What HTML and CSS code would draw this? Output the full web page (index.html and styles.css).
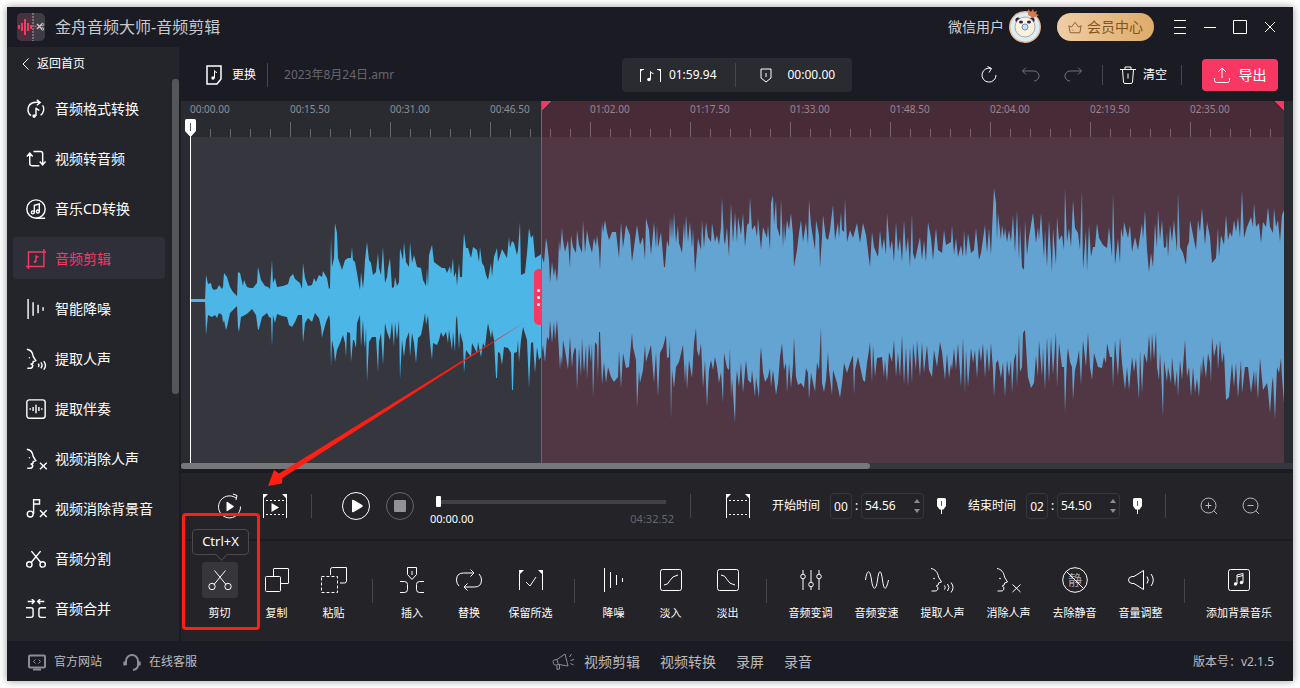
FILE: index.html
```
<!DOCTYPE html>
<html lang="zh-CN">
<head>
  <meta charset="UTF-8">
  <title>金舟音频大师-音频剪辑</title>
  <link rel="stylesheet" href="styles.css">
</head>
<body>

<!-- icons -->
<svg class="sprite" aria-hidden="true">
  <symbol id="i-format" viewBox="0 0 24 24"><path d="M6 20A9 9 0 0 1 8 4.500Q10 3.500 16 4M13 1l4 3.200-4 3.300M20 7.500a9 9 0 0 1-2.500 12"/><path d="M12 20.500V10.500q1 2.500 4 3"/><circle class="fill" cx="9.800" cy="20.500" r="2.200"/></symbol>
  <symbol id="i-loop" viewBox="0 0 24 24"><path d="M4.500 6v11.500q0 2.500 2.500 2.500h9M1 9l3.500-4L8 9M9 3h8.500Q20 3 20 5.500V18M16.500 15l3.500 4 3.500-4"/></symbol>
  <symbol id="i-cd" viewBox="0 0 24 24"><circle cx="12" cy="12" r="11"/><path d="M12 23h11M10 16V7.500l6-1.500v9"/><circle cx="8.200" cy="16" r="1.800"/><circle cx="14.200" cy="15" r="1.800"/></symbol>
  <symbol id="i-crop" viewBox="0 0 24 24"><path d="M3 24V3.500h21M0 21h21.500V0"/><path d="M12 15V8.500l3 1.500"/><circle class="fill" cx="10.800" cy="15.200" r="1.500"/></symbol>
  <symbol id="i-bars" viewBox="0 0 24 24"><path d="M2.500 0v24M8.500 4v16M14.500 7v10M20.500 10v4"/></symbol>
  <symbol id="i-voice" viewBox="0 0 26 26"><path d="M1 1.500c4 .5 7 4 7.500 8.500l3 5-3 1-.3 2-2 1 1.800 1.500c0 2.500-1 3.500-3 3.500H1.500M14.500 18.500q1.500 2 0 4M17.500 17q3 3.500 0 7M21 15.500q4 5 0 10"/><circle class="fill" cx="4" cy="11.500" r=".8"/></symbol>
  <symbol id="i-novoice" viewBox="0 0 26 26"><path d="M1 1.500c4 .5 7 4 7.500 8.500l3 5-3 1-.3 2-2 1 1.800 1.500c0 2.500-1 3.500-3 3.500H1.500M16.500 17.500l8 7.500M24.500 17.500l-8 7.500"/><circle class="fill" cx="4" cy="11.500" r=".8"/></symbol>
  <symbol id="i-wavebox" viewBox="0 0 24 24"><rect x="1" y="1" width="22" height="22" rx="3"/><path d="M5 11v2M8.500 9.500v5M12 7v10M15.500 9.500v5M19 11v2"/></symbol>
  <symbol id="i-nobgm" viewBox="0 0 26 26"><path d="M9 19V2h7v5H9"/><circle cx="5" cy="19" r="3.500"/><path d="M16.500 14.500l8 8M24.500 14.500l-8 8"/></symbol>
  <symbol id="i-cut" viewBox="0 0 24 24"><path d="M6.500 2.500l11.500 14M17.500 2.500L6 16.500"/><circle cx="4" cy="18.500" r="3.200"/><circle cx="20" cy="18.500" r="3.200"/></symbol>
  <symbol id="i-merge" viewBox="0 0 24 24"><path d="M0 10.500h6q2.500 0 2.500 2.500v6.500q0 2.500-2.500 2.500H0M24 10.500h-6q-2.500 0-2.500 2.500v6.500q0 2.500 2.500 2.500h6M2 3h8M7 0l3 3-3 3M22 3h-8M17 0l-3 3 3 3"/></symbol>
  <symbol id="i-copy" viewBox="0 0 24 24"><path d="M8.500 8.500V1q0-.5.500-.5H23q.5 0 .5.500v14q0 .5-.5.500h-7"/><rect x=".5" y="8.500" width="15" height="15" rx="1"/></symbol>
  <symbol id="i-paste" viewBox="0 0 26 26"><path d="M9.500 8V2.500q0-2 2-2H25.500V14q0 2-2 2H19"/><rect x=".5" y="9.500" width="16" height="16" stroke-dasharray="3 2"/></symbol>
  <symbol id="i-insert" viewBox="0 0 24 26"><path d="M7.500.5h9v7L12 12.500 7.500 7.500zM12 4v4M0 14.500h4.500q3 0 3 3v5q0 3-3 3H0M24 14.500h-4.500q-3 0-3 3v5q0 3 3 3H24"/></symbol>
  <symbol id="i-replace" viewBox="0 0 26 22"><path d="M3 17Q.5 14.500.5 11q0-7 7-7H18M14.500.5L18 4l-3.500 3.500M23 5q2.500 2.500 2.500 6 0 7-7 7H8M11.500 14.500L8 18l3.500 3.500"/></symbol>
  <symbol id="i-keep" viewBox="0 0 24 20"><path d="M.5 20V.5H4M23.500 20V.5H20M7 12l4 4 6-9"/><path class="fill" d="M0 0h5L0 5zM24 0h-5l5 5z"/></symbol>
  <symbol id="i-fadein" viewBox="0 0 22 22"><rect x=".5" y=".5" width="21" height="21" rx="2"/><path d="M4 16q4 0 6-4.500T18 6"/></symbol>
  <symbol id="i-fadeout" viewBox="0 0 22 22"><rect x=".5" y=".5" width="21" height="21" rx="2"/><path d="M4 6q4 0 6 4.500T18 16"/></symbol>
  <symbol id="i-tune" viewBox="0 0 22 20"><path d="M3 0v4M3 9v11M11 0v12M11 17v3M19 0v4M19 9v11"/><circle cx="3" cy="6.500" r="2.300"/><circle cx="11" cy="14.500" r="2.300"/><circle cx="19" cy="6.500" r="2.300"/></symbol>
  <symbol id="i-speed" viewBox="0 0 24 18"><path d="M.5 9C2-2 5-2 6.500 9S11 20 12.500 9 16 -2 17.500 9 21 20 23.500 9"/></symbol>
  <symbol id="i-mute" viewBox="0 0 26 26"><circle cx="13" cy="13" r="12.300"/><path d="M4.500 4.500l17 17"/></symbol>
  <symbol id="i-volume" viewBox="0 0 26 20"><path d="M15.500.5L6 6.500H4Q.5 7 .5 10t3.500 3.500h2l9.500 6zM19 6.500q2.500 3.500 0 7M23 4q4.500 6 0 12"/></symbol>
  <symbol id="i-music" viewBox="0 0 22 22"><rect x=".5" y=".5" width="21" height="21" rx="2"/><path d="M9 15V6l6-1.500V13.500M9 8l6-1.500"/><circle class="fill" cx="7.500" cy="15" r="1.700"/><circle class="fill" cx="13.500" cy="13.500" r="1.700"/></symbol>
  <symbol id="i-frame" viewBox="0 0 24 24"><path d="M.5 24V.5H4M23.500 24V.5H20"/><path stroke-dasharray="2 2" d="M3 6.500h19M3 20.500h19"/><path class="fill" d="M0 0h5L0 5zM24 0h-5l5 5z"/></symbol>
  <symbol id="i-pin" viewBox="0 0 9 16"><path class="fill" d="M0 1.500Q0 0 1.500 0h6Q9 0 9 1.500V8l-2.500 3.500H5V16H4v-4.500H2.500L0 8z"/><path class="hole" d="M4.500 3v5"/></symbol>
</svg>

<div class="window">
  <header class="titlebar">
    <svg class="logo" viewBox="0 0 28 28">
      <rect width="28" height="28" rx="5" fill="#3e3d46"/>
      <path d="M5 0h11v28H5a5 5 0 0 1-5-5V5a5 5 0 0 1 5-5z" fill="#49303d"/>
      <path d="M2 12v4M5 10v8M8 6v16M11 10v8M14 12v4" stroke="#e93e62" stroke-width="2"/>
      <path d="M16 0v28" stroke="#aaa" stroke-dasharray="2 1"/>
      <path d="M20 11l5 5M20 16l5-5" stroke="#c5c5c9" stroke-width="1.500"/>
      <circle cx="18.500" cy="13.500" r="1" fill="#e93e62"/>
      <circle cx="25.500" cy="11.500" r="1.200" fill="none" stroke="#c5c5c9"/><circle cx="25.500" cy="16" r="1.200" fill="none" stroke="#c5c5c9"/>
    </svg>
    <h1>金舟音频大师-音频剪辑</h1>
    <div class="account">
      <span class="user">微信用户</span>
      <svg class="avatar" viewBox="0 0 32 36">
        <circle cx="16" cy="19" r="15.200" fill="#d7effb" stroke="#edb98f" stroke-width="1.500"/>
        <path d="M19 1l3 3 2-3 1 3 3-1-1 3 3 1-6 3-5-3z" fill="#d5794e"/>
        <circle cx="9" cy="12" r="2.600" fill="#302049"/><circle cx="23" cy="12" r="2.600" fill="#302049"/>
        <circle cx="16" cy="19" r="10" fill="#fbf1df" stroke="#a6876e" stroke-width=".7"/>
        <ellipse cx="12" cy="14" rx="2" ry="1.500" fill="#302049"/><ellipse cx="20" cy="14" rx="2" ry="1.500" fill="#302049"/>
        <circle cx="16" cy="19" r="3" fill="#c5e2f5" stroke="#768bb6"/>
      </svg>
      <button class="vip">
        <svg viewBox="0 0 16 14"><path d="M1 5l3 1.500L8 1l4 5.500L15 5l-1.500 8h-11zM5 9.500l1 1"/></svg>
        会员中心
      </button>
      <button class="win-btn" aria-label="菜单"><svg viewBox="0 0 14 14"><path d="M1 .5h12M1 7.500h12M1 13.500h12"/></svg></button>
      <button class="win-btn" aria-label="最小化"><svg viewBox="0 0 14 14"><path d="M1 7.500h12"/></svg></button>
      <button class="win-btn" aria-label="最大化"><svg viewBox="0 0 14 14"><path d="M.5.500h13v13H.5z"/></svg></button>
      <button class="win-btn" aria-label="关闭"><svg viewBox="0 0 14 14"><path d="M2 2l10 10M12 2L2 12"/></svg></button>
    </div>
  </header>

  <div class="body">
    <aside class="sidebar">
      <button class="back"><svg viewBox="0 0 7 12"><path d="M6.500.5L1 6l5.500 5.500"/></svg>返回首页</button>
      <div class="side-scroll">
        <nav class="side-list">
          <a href="#"><svg><use href="#i-format"/></svg>音频格式转换</a>
          <a href="#"><svg><use href="#i-loop"/></svg>视频转音频</a>
          <a href="#"><svg><use href="#i-cd"/></svg>音乐CD转换</a>
          <a href="#" class="active"><svg><use href="#i-crop"/></svg>音频剪辑</a>
          <a href="#"><svg><use href="#i-bars"/></svg>智能降噪</a>
          <a href="#"><svg class="tall"><use href="#i-voice"/></svg>提取人声</a>
          <a href="#"><svg><use href="#i-wavebox"/></svg>提取伴奏</a>
          <a href="#"><svg class="tall"><use href="#i-novoice"/></svg>视频消除人声</a>
          <a href="#"><svg class="tall"><use href="#i-nobgm"/></svg>视频消除背景音</a>
          <a href="#"><svg><use href="#i-cut"/></svg>音频分割</a>
          <a href="#"><svg><use href="#i-merge"/></svg>音频合并</a>
        </nav>
        <div class="side-track"><div class="side-thumb"></div></div>
      </div>
    </aside>

    <main class="main">
      <div class="toolbar">
        <div class="file">
          <button class="swap">
            <svg viewBox="0 0 16 20"><path d="M1 1h14v13l-4 5H1z"/><path class="thin" d="M8.500 13V5.500q.5 2 2.500 2"/><circle class="fill" cx="7" cy="13" r="1.700"/></svg>
            更换
          </button>
          <i class="line"></i>
          <span class="filename">2023年8月24日.amr</span>
        </div>
        <div class="times">
          <svg class="clip-icon" viewBox="0 0 21 13"><path d="M.5 13V.5H4M20.500 13V.5H17M10.500 10V2.500q.5 2 3 2"/><path class="fill" d="M0 0h4L0 3zM21 0h-4l4 3z"/><circle class="fill" cx="9" cy="10.500" r="1.800"/></svg>
          <span>01:59.94</span>
          <i class="line"></i>
          <svg class="mark-icon" viewBox="0 0 12 15"><path d="M1 1h10v9l-5 4-5-4zM6 5v4"/></svg>
          <span>00:00.00</span>
        </div>
        <div class="actions">
          <button class="round" aria-label="刷新"><svg viewBox="0 0 18 18"><path d="M16 9a7 7 0 1 1-5-6.600M7.500.5l4 2-2.500 4"/></svg></button>
          <button class="round dim" aria-label="撤销"><svg viewBox="0 0 18 18"><path d="M4 1.500L.5 5 4 8.500M.5 5H12a5 5 0 0 1 0 10"/></svg></button>
          <button class="round dim" aria-label="重做"><svg viewBox="0 0 18 18"><path d="M14 1.500L17.500 5 14 8.500M17.500 5H6a5 5 0 0 0 0 10"/></svg></button>
          <i class="line short"></i>
          <button class="clear">
            <svg viewBox="0 0 16 18"><path d="M0 3.500h16M5 3.500V1h6v2.500M2.500 3.500L3.500 16q.2 1.500 1.500 1.500h6q1.300 0 1.500-1.500l1-12.500M8 7.500v5"/></svg>
            清空
          </button>
          <i class="line short"></i>
          <button class="export">
            <svg viewBox="0 0 16 16"><path d="M8 11V1M4 5l4-4 4 4M.5 11v2.500q0 2 2 2h11q2 0 2-2V11"/></svg>
            导出
          </button>
        </div>
      </div>

      <div class="timeline">
        <div class="track">
          <div class="ruler">
            <span>00:00.00</span><span>00:15.50</span><span>00:31.00</span><span>00:46.50</span><span>01:02.00</span><span>01:17.50</span><span>01:33.00</span><span>01:48.50</span><span>02:04.00</span><span>02:19.50</span><span>02:35.00</span>
          </div>
          <svg class="wave" viewBox="190 137 1094 326" preserveAspectRatio="none">
            <path d="M190 299h17v3h-17z"/>
            <!-- upper half -->
            <polygon points="205,301 206,275 208,284 211,283 212,288 214,290 217,289 219,285 222,289 223,287 224,273 227,277 230,287 233,292 237,296 238,272 240,273 243,286 244,280 247,287 250,288 253,288 257,283 258,267 261,280 265,286 268,287 270,289 272,260 273,283 275,278 277,287 283,286 288,284 290,277 293,274 295,279 300,283 302,289 303,263 305,278 308,286 312,285 314,278 316,282 319,275 322,277 323,271 327,278 329,289 330,288 331,237 332,267 334,258 335,223 337,233 338,258 341,267 342,270 345,260 348,258 351,258 352,247 353,260 355,262 357,273 359,285 360,290 361,272 363,288 364,277 365,260 367,242 369,260 371,263 373,275 376,272 378,253 379,268 381,275 383,247 385,283 387,277 388,268 390,258 392,288 394,287 395,277 397,286 399,282 400,248 403,260 404,242 406,262 409,267 410,242 412,263 414,255 417,267 421,268 423,280 426,286 427,268 428,287 429,255 432,245 434,262 438,265 442,268 445,268 447,273 450,266 451,274 453,258 454,277 456,272 457,286 459,263 460,277 462,277 463,250 464,233 466,248 468,248 471,258 473,247 477,250 479,262 480,247 482,263 484,266 486,275 488,280 491,263 492,277 494,257 497,248 498,262 502,249 507,258 509,237 510,248 512,241 514,243 517,255 518,250 520,222 521,275 525,273 527,253 529,228 531,238 533,235 535,258 540,255 541,254 544,263 546,238 547,243 549,260 550,283 552,262 554,277 555,267 557,282 558,268 559,240 560,252 562,228 563,240 565,252 568,240 570,268 571,235 573,247 576,253 577,230 579,245 582,253 583,220 585,253 587,230 589,242 592,253 594,238 596,246 597,235 599,250 600,270 602,222 603,233 605,220 607,232 609,240 612,232 616,232 619,258 621,222 623,248 626,225 630,235 632,262 635,240 637,225 640,245 643,237 645,260 646,218 649,230 651,255 654,222 656,248 657,225 658,248 661,232 664,267 665,267 667,240 669,247 670,217 671,240 672,217 673,240 674,212 676,243 678,225 679,243 682,253 684,222 685,242 686,215 688,242 690,222 692,248 693,228 695,273 698,238 701,250 702,220 704,248 706,222 708,237 711,242 712,223 715,242 717,235 719,245 721,227 722,197 724,240 725,245 727,227 729,257 731,203 733,243 735,212 737,243 738,217 741,235 743,213 745,247 747,225 749,223 750,197 752,230 755,225 757,237 758,218 761,250 763,227 767,238 768,225 770,250 771,203 773,195 774,225 776,200 777,227 780,237 781,198 783,248 784,222 785,242 787,220 789,230 791,213 793,235 794,267 797,250 799,233 801,220 803,242 806,222 808,245 809,200 811,225 815,250 816,220 819,235 820,268 822,237 823,215 826,238 828,240 830,230 833,205 835,240 838,222 839,238 841,212 842,230 844,232 845,198 847,242 850,230 853,238 857,223 860,243 863,223 866,235 870,267 872,232 874,247 878,257 880,230 882,250 884,238 886,255 887,213 890,250 892,240 894,262 896,222 898,252 900,238 902,262 904,220 906,253 908,237 910,267 912,213 913,253 915,260 920,237 922,260 924,240 926,262 928,222 931,238 933,260 936,228 938,250 942,253 944,230 946,245 951,242 952,225 954,255 956,238 958,257 961,245 963,257 964,230 966,257 968,233 971,253 974,250 976,228 979,260 981,253 985,225 987,253 989,228 991,255 992,230 994,188 996,203 997,240 998,213 1001,240 1002,225 1004,238 1005,228 1007,242 1009,230 1011,242 1013,215 1015,253 1017,210 1019,260 1020,225 1022,267 1024,270 1025,220 1027,255 1029,237 1033,213 1036,243 1038,227 1039,240 1041,213 1044,258 1045,230 1047,267 1049,220 1052,272 1053,228 1056,265 1057,217 1059,240 1062,235 1064,250 1065,188 1067,242 1069,228 1071,247 1073,200 1075,228 1078,233 1080,250 1082,190 1083,270 1086,230 1087,272 1089,225 1091,257 1093,247 1095,247 1097,223 1099,238 1103,245 1107,248 1109,227 1112,257 1113,193 1115,265 1118,238 1120,263 1121,228 1123,238 1124,222 1128,238 1130,225 1132,252 1135,237 1138,250 1142,223 1143,240 1145,210 1147,250 1149,272 1151,253 1153,267 1155,223 1157,248 1158,210 1160,240 1162,220 1164,248 1166,247 1167,232 1168,258 1170,225 1172,242 1174,220 1177,252 1178,193 1180,247 1183,253 1186,265 1187,247 1189,242 1190,220 1193,235 1196,250 1198,220 1200,232 1202,208 1205,245 1207,222 1210,237 1212,263 1216,258 1218,227 1219,257 1221,235 1224,245 1226,215 1228,240 1230,232 1232,237 1234,220 1236,232 1238,217 1240,238 1242,190 1244,238 1247,227 1251,217 1253,227 1254,203 1256,227 1259,223 1261,243 1263,222 1266,227 1268,207 1270,227 1273,233 1274,208 1276,227 1278,220 1280,242 1282,215 1284,210 1284,301"/>
            <!-- lower half -->
            <polygon points="205,300 206,335 208,315 212,317 215,315 217,318 219,313 222,315 223,323 224,320 226,330 227,327 230,313 233,310 237,306 238,327 239,332 241,317 245,315 248,313 252,309 256,315 258,330 259,329 262,317 267,313 269,317 271,318 272,347 273,315 275,323 277,314 282,316 287,317 289,325 292,327 295,322 298,315 302,315 303,343 305,323 308,318 312,322 315,313 318,317 319,318 321,327 322,338 323,333 326,322 329,315 330,320 331,367 332,340 334,350 335,362 337,350 340,343 343,335 345,343 346,357 347,332 350,333 351,362 353,340 354,340 356,348 357,323 360,315 361,347 363,320 364,340 365,348 366,327 367,382 369,342 372,337 376,337 378,372 379,342 381,333 383,365 385,323 387,332 390,340 392,322 394,347 395,322 397,340 399,320 400,380 402,340 404,357 406,340 409,332 410,357 412,333 414,343 416,363 418,338 421,335 423,325 425,313 426,325 428,315 430,342 432,360 433,343 437,345 439,340 441,332 443,337 446,332 448,343 449,330 452,350 453,332 455,352 456,320 457,315 459,350 460,332 463,343 464,373 466,350 471,357 472,343 477,353 478,342 481,357 483,343 485,347 487,330 488,323 491,338 492,330 494,340 496,378 497,378 498,352 500,353 502,365 504,347 508,348 511,353 512,390 513,390 514,353 517,352 518,340 519,362 521,340 523,327 527,340 529,388 531,343 533,342 535,373 537,347 539,360 541,357 543,345 545,362 547,337 549,340 550,320 552,343 554,322 555,340 557,320 558,335 560,370 561,355 562,365 563,340 565,350 568,370 570,337 572,368 573,355 575,347 576,350 577,390 579,348 581,377 582,338 584,373 586,345 587,380 589,343 591,363 592,343 593,398 595,342 597,345 598,380 599,332 600,332 602,385 604,362 606,383 608,367 611,377 614,382 618,377 619,350 621,388 623,353 626,368 629,367 632,333 633,347 636,360 637,408 639,370 640,383 643,370 645,345 646,362 651,345 654,383 656,352 658,397 660,353 663,347 666,335 667,358 669,357 670,340 671,420 672,370 674,388 676,367 679,362 683,345 685,383 686,362 687,390 689,360 692,378 694,343 696,328 697,350 699,357 701,343 703,388 705,360 707,407 709,370 711,360 713,370 715,357 717,367 719,383 721,372 723,403 724,353 727,368 729,370 730,348 731,398 732,378 735,423 736,383 737,370 739,387 741,362 743,393 746,360 748,380 751,383 752,370 755,397 756,377 759,398 760,360 761,347 763,372 765,382 768,377 770,368 771,387 773,370 776,395 778,383 780,357 782,343 784,370 786,363 787,393 789,363 791,388 793,365 794,337 796,377 798,385 801,383 804,388 806,368 808,373 809,400 811,373 815,392 817,362 819,370 821,327 822,383 824,392 826,380 828,352 829,370 832,395 833,370 837,383 840,398 842,383 844,363 847,373 850,363 853,355 854,395 855,370 858,357 863,380 865,382 867,363 869,350 870,342 872,383 873,345 875,377 877,358 882,357 884,377 885,360 887,382 889,352 892,362 894,340 896,377 898,352 900,377 902,335 904,385 906,347 908,387 910,347 912,383 913,343 916,370 917,340 920,377 922,342 924,373 927,345 929,370 932,377 934,350 937,367 940,342 942,352 945,380 947,353 949,378 951,363 952,370 954,348 956,370 958,343 961,387 963,338 965,393 966,350 968,387 971,348 973,363 975,350 977,378 979,347 981,362 983,343 985,378 987,347 989,373 991,343 993,370 994,397 996,363 998,360 1001,378 1003,362 1005,397 1007,360 1009,377 1011,360 1012,393 1014,360 1016,353 1017,387 1019,333 1020,372 1022,367 1023,333 1025,330 1027,363 1028,377 1031,388 1034,383 1036,355 1038,377 1039,340 1042,377 1043,347 1045,390 1047,337 1049,383 1051,337 1053,375 1056,332 1057,388 1059,343 1062,367 1064,367 1065,413 1067,358 1068,348 1070,362 1072,367 1073,400 1075,370 1077,362 1079,350 1081,385 1083,340 1086,367 1088,332 1090,367 1092,380 1094,353 1098,367 1102,368 1104,357 1106,363 1107,343 1110,357 1112,357 1113,387 1115,340 1118,377 1120,337 1122,363 1125,390 1127,367 1129,390 1132,357 1134,372 1136,358 1139,400 1140,350 1142,393 1144,353 1147,363 1149,335 1151,363 1152,333 1154,360 1156,332 1157,367 1159,380 1160,352 1161,370 1163,417 1164,360 1167,382 1168,367 1171,383 1172,357 1175,387 1177,370 1178,397 1180,360 1182,380 1185,340 1187,377 1189,367 1191,397 1193,367 1195,393 1197,378 1199,397 1201,362 1202,377 1203,355 1206,378 1208,353 1210,363 1211,383 1212,337 1214,357 1217,343 1218,370 1220,340 1222,363 1224,352 1226,400 1229,397 1232,363 1234,387 1236,363 1238,398 1241,360 1242,393 1245,367 1248,367 1251,393 1254,370 1255,390 1256,370 1258,400 1260,358 1263,390 1267,383 1268,390 1270,413 1272,383 1273,377 1275,420 1277,367 1279,373 1281,358 1282,377 1284,403 1284,300"/>
          </svg>
          <div class="selection"><div class="handle"><i></i><i></i><i></i></div></div>
          <div class="playhead"><svg viewBox="0 0 11 18"><path d="M0 1.500Q0 0 1.500 0h8Q11 0 11 1.500V12l-4.500 5h-2L0 12z"/><path class="hole" d="M5.500 4v8"/></svg></div>
        </div>
        <div class="hscroll"><div class="hthumb"></div></div>
      </div>

      <section class="controls">
        <button class="ctl" aria-label="循环播放"><svg viewBox="0 0 24 24"><path d="M22.500 12.500A11 11 0 1 1 18 4M15 0l4 1.500-1 4.500"/><path class="fill" d="M8.500 8.500q0-1 1-.5l6 4q.7.500 0 1l-6 4q-1 .5-1-.5z"/></svg></button>
        <button class="ctl" aria-label="播放选区"><svg viewBox="0 0 24 24"><use href="#i-frame"/><path class="fill" d="M8.500 9l7.500 4.500-7.500 4.500z"/></svg></button>
        <i class="line"></i>
        <button class="play" aria-label="播放"><svg viewBox="0 0 28 28"><circle cx="14" cy="14" r="13.500"/><path class="fill" d="M10 9q0-2 1.800-1l8.400 5q1.200 1 0 2l-8.400 5q-1.800 1-1.800-1z"/></svg></button>
        <button class="stop" aria-label="停止"><svg viewBox="0 0 28 28"><circle cx="14" cy="14" r="13.500"/><rect class="fill" x="8" y="8" width="12" height="12" rx="1"/></svg></button>
        <div class="progress">
          <input type="range" min="0" max="272" value="0" aria-label="播放进度">
          <div class="progress-times"><span>00:00.00</span><span class="total">04:32.52</span></div>
        </div>
        <i class="line"></i>
        <svg class="range-icon"><use href="#i-frame"/></svg>
        <div class="time-set">
          <label for="startSec">开始时间</label>
          <input type="text" class="min" value="00" aria-label="开始分钟"><span>:</span>
          <div class="spin"><input type="text" id="startSec" value="54.56"><svg viewBox="0 0 6 14"><path d="M0 4l3-4 3 4zM0 10l3 4 3-4z"/></svg></div>
          <svg class="pin"><use href="#i-pin"/></svg>
        </div>
        <div class="time-set">
          <label for="endSec">结束时间</label>
          <input type="text" class="min" value="02" aria-label="结束分钟"><span>:</span>
          <div class="spin"><input type="text" id="endSec" value="54.50"><svg viewBox="0 0 6 14"><path d="M0 4l3-4 3 4zM0 10l3 4 3-4z"/></svg></div>
          <svg class="pin"><use href="#i-pin"/></svg>
        </div>
        <i class="line"></i>
        <button class="zoom" aria-label="放大"><svg viewBox="0 0 18 18"><circle cx="8.500" cy="8.500" r="7.500"/><path d="M14 14l3 3M5.500 8.500h6M8.500 5.500v6"/></svg></button>
        <button class="zoom" aria-label="缩小"><svg viewBox="0 0 18 18"><circle cx="8.500" cy="8.500" r="7.500"/><path d="M14 14l3 3M5.500 8.500h6"/></svg></button>
      </section>

      <section class="tools">
        <div class="group">
          <button class="tool hover"><span class="tip">Ctrl+X</span><span class="pic"><svg class="mid"><use href="#i-cut"/></svg></span>剪切</button>
          <button class="tool"><span class="pic"><svg class="mid"><use href="#i-copy"/></svg></span>复制</button>
          <button class="tool"><span class="pic"><svg><use href="#i-paste"/></svg></span>粘贴</button>
        </div>
        <i class="line"></i>
        <div class="group">
          <button class="tool"><span class="pic"><svg><use href="#i-insert"/></svg></span>插入</button>
          <button class="tool"><span class="pic"><svg><use href="#i-replace"/></svg></span>替换</button>
          <button class="tool wide"><span class="pic"><svg class="low"><use href="#i-keep"/></svg></span>保留所选</button>
        </div>
        <i class="line"></i>
        <div class="group">
          <button class="tool"><span class="pic"><svg class="mid"><use href="#i-bars"/></svg></span>降噪</button>
          <button class="tool"><span class="pic"><svg class="box"><use href="#i-fadein"/></svg></span>淡入</button>
          <button class="tool"><span class="pic"><svg class="box"><use href="#i-fadeout"/></svg></span>淡出</button>
        </div>
        <i class="line"></i>
        <div class="group">
          <button class="tool wide"><span class="pic"><svg class="low"><use href="#i-tune"/></svg></span>音频变调</button>
          <button class="tool wide"><span class="pic"><svg class="mid"><use href="#i-speed"/></svg></span>音频变速</button>
          <button class="tool wide"><span class="pic"><svg><use href="#i-voice"/></svg></span>提取人声</button>
          <button class="tool wide"><span class="pic"><svg><use href="#i-novoice"/></svg></span>消除人声</button>
          <button class="tool wide"><span class="pic"><svg viewBox="0 0 26 26"><text x="13" y="18" text-anchor="middle">静</text><use href="#i-mute"/></svg></span>去除静音</button>
          <button class="tool wide"><span class="pic"><svg><use href="#i-volume"/></svg></span>音量调整</button>
        </div>
        <i class="line"></i>
        <div class="group">
          <button class="tool widest"><span class="pic"><svg class="box"><use href="#i-music"/></svg></span>添加背景音乐</button>
        </div>
        <div class="callout"></div>
        <svg class="arrow" viewBox="0 0 257 164"><path d="M257 0L11 151.500 6 148 0 164l14-2.500L14.500 156z"/></svg>
      </section>
    </main>
  </div>

  <footer class="footer">
    <div class="foot-left">
      <a href="#"><svg viewBox="0 0 18 16"><rect x="1" y="1" width="16" height="12" rx="1"/><path d="M5 15h8"/><path class="thin" d="M7.500 5l-2 2 2 2M10.500 5l2 2-2 2"/></svg>官方网站</a>
      <a href="#"><svg viewBox="0 0 18 17"><path d="M3 11V7a6 6 0 0 1 12 0v4q0 4-5 5"/><path class="thick" d="M1.800 7.500v4M16.200 7.500v4"/></svg>在线客服</a>
    </div>
    <nav class="foot-mid">
      <svg viewBox="0 0 22 18"><path d="M1 8.500q0-1 1-1.500l3-.5L13 1l3 12-9-1.500-3 .5q-2 .5-2.500-1.500zM5 6.500L6.500 12M5 12.500v4l2.500-.5v-4M17.500 4l2-3M18.500 7.500l3.500-1M18.500 10.500l3 1.500"/></svg>
      <a href="#">视频剪辑</a><a href="#">视频转换</a><a href="#">录屏</a><a href="#">录音</a>
    </nav>
    <span class="version">版本号：v2.1.5</span>
  </footer>
</div>

</body>
</html>
```
FILE: styles.css
```
* {
  box-sizing: border-box;
}

body {
  margin: 0;
  padding: 7px;
  background: #fff;
  color: #fff;
  font: 12px/16px "Noto Sans", "Noto Sans CJK SC", sans-serif;
}

button {
  border: 0;
  padding: 0;
  background: none;
  color: inherit;
  font: inherit;
  display: flex;
  align-items: center;
}

a {
  color: inherit;
  text-decoration: none;
}

svg {
  fill: none;
  stroke: currentColor;
  flex: none;
  display: block;
  overflow: visible;
}

.fill {
  fill: currentColor;
  stroke: none;
}

.thin {
  stroke-width: 1;
}

.hole {
  stroke: #55555a;
}

.sprite {
  position: absolute;
  width: 0;
  height: 0;
}

.line {
  width: 1px;
  height: 24px;
  background: #46464c;
  flex: none;
}

.line.short {
  height: 20px;
}

.window {
  display: flex;
  flex-direction: column;
  height: calc(100vh - 14px);
  background: #1b1b24;
  box-shadow: 0 0 8px rgba(0, 0, 0, 0.4);
}

/* title bar */
.titlebar {
  display: flex;
  align-items: center;
  height: 40px;
  flex: none;
  padding: 0 16px 0 10px;
}

.logo {
  width: 28px;
  height: 28px;
  stroke: none;
}

.titlebar h1 {
  margin: 0 0 0 10px;
  font-size: 16px;
  line-height: 24px;
  font-weight: normal;
  color: #c9c9cb;
}

.account {
  display: flex;
  align-items: center;
  margin-left: auto;
}

.user {
  font-size: 14px;
  color: #d0d0d3;
}

.avatar {
  width: 32px;
  height: 36px;
  margin: 0 16px 3px 5px;
  stroke: none;
}

.vip {
  width: 97px;
  height: 28px;
  justify-content: center;
  gap: 5px;
  margin-right: 19px;
  border-radius: 14px;
  background: linear-gradient(90deg, #efcda6, #dfab68);
  color: #83551c;
  font-size: 14px;
}

.vip svg {
  width: 14px;
  height: 13px;
}

.win-btn {
  margin-left: 16px;
}

.vip + .win-btn {
  margin-left: 0;
}

.win-btn svg {
  width: 14px;
  height: 14px;
}

.body {
  display: flex;
  flex: 1;
  min-height: 0;
}

/* sidebar */
.sidebar {
  width: 172px;
  flex: none;
  display: flex;
  flex-direction: column;
  background: #24252a;
}

.back {
  height: 32px;
  padding: 2px 0 0 15px;
  gap: 8px;
}

.back svg {
  width: 7px;
  height: 12px;
}

.side-scroll {
  flex: 1;
  min-height: 0;
  display: flex;
}

.side-list {
  flex: 1;
  display: flex;
  flex-direction: column;
  gap: 8px;
  padding: 8px 7px 0 6px;
  overflow: hidden;
}

.side-list a {
  height: 42px;
  flex: none;
  display: flex;
  align-items: center;
  gap: 9px;
  padding: 2px 0 0 13px;
  border-radius: 4px;
  font-size: 14px;
}

.side-list svg {
  width: 20px;
  height: 20px;
  stroke-width: 1.7;
}

.side-list .tall {
  width: 22px;
  height: 22px;
  margin-right: -2px;
}

.side-list .active {
  background: #2f2f3a;
  color: #f83862;
}

.side-track {
  width: 7px;
}

.side-thumb {
  height: 56%;
  border-radius: 3px;
  background: #55565a;
}

/* top toolbar */
.main {
  flex: 1;
  min-width: 0;
  padding-left: 2px;
  display: flex;
  flex-direction: column;
}

.toolbar {
  height: 54px;
  flex: none;
  display: grid;
  grid-template-columns: 1fr auto 1fr;
  align-items: center;
  padding: 2px 15px 0 25px;
}

.file,
.times,
.actions {
  display: flex;
  align-items: center;
}

.swap {
  gap: 10px;
}

.swap svg {
  width: 16px;
  height: 20px;
  stroke-width: 1.5;
}

.file .line {
  margin: 0 16px 0 11px;
}

.filename {
  color: #66666c;
}

.times {
  height: 34px;
  padding: 0 17px 0 18px;
  margin-right: 10px;
  border-radius: 4px;
  background: #2a2a31;
}

.times .line {
  margin: 0 24px 0 18px;
}

.clip-icon {
  width: 21px;
  height: 13px;
  margin-right: 8px;
}

.mark-icon {
  width: 12px;
  height: 15px;
  margin-right: 16px;
}

.actions {
  justify-content: flex-end;
}

.round {
  margin-right: 24px;
}

.round svg,
.clear svg {
  width: 18px;
  height: 18px;
}

.dim {
  color: #727277;
}

.dim + .line {
  margin-left: -4px;
}

.clear {
  gap: 6px;
  margin: 0 14px 0 16px;
}

.export {
  width: 76px;
  height: 32px;
  justify-content: center;
  gap: 9px;
  margin-left: 20px;
  border-radius: 4px;
  background: #f83862;
  font-size: 14px;
}

.export svg {
  width: 16px;
  height: 16px;
}

/* timeline */
.timeline {
  flex: 1;
  min-height: 0;
  display: flex;
  flex-direction: column;
  background: #2a2a31;
}

.track {
  position: relative;
  flex: 1;
  min-height: 0;
  margin: 0 9px;
  display: flex;
  flex-direction: column;
  background: #36363e;
}

.ruler {
  height: 36px;
  flex: none;
  display: flex;
  overflow: hidden;
  background:
    repeating-linear-gradient(90deg, #63676b 0 1px, transparent 1px 100px) 0 100% / 100% 15px no-repeat,
    repeating-linear-gradient(90deg, #63676b 0 1px, transparent 1px 20px) 0 100% / 100% 8px no-repeat,
    #2a2a31;
  color: #8f8f94;
  font-size: 10px;
}

.ruler span {
  width: 100px;
  flex: none;
}

.wave {
  width: 100%;
  flex: 1;
  min-height: 0;
  fill: #4cb6e6;
  stroke: none;
}

.selection {
  position: absolute;
  inset: 0 0 0 32.1%;
  border-left: 1px solid #c73a5b;
  background:
    linear-gradient(135deg, #f83862 50%, transparent 50%) 0 0 / 10px 10px no-repeat,
    linear-gradient(225deg, #f83862 50%, transparent 50%) 100% 0 / 10px 10px no-repeat,
    rgba(248, 56, 98, 0.14);
}

.handle {
  position: absolute;
  right: 100%;
  top: 168px;
  width: 8px;
  height: 56px;
  display: flex;
  flex-direction: column;
  align-items: center;
  justify-content: center;
  gap: 4px;
  border-radius: 5px 0 0 5px;
  background: #f83862;
}

.handle i {
  width: 3px;
  height: 3px;
  border-radius: 50%;
  background: #fff;
}

.playhead {
  position: absolute;
  left: 0;
  top: 18px;
  bottom: 0;
  width: 1px;
  background: #fff;
}

.playhead svg {
  width: 11px;
  height: 18px;
  margin-left: -5px;
  fill: #fff;
  stroke: none;
}

.playhead .hole {
  stroke: #55555a;
}

.hscroll {
  height: 6px;
  background: #36363e;
}

.hthumb {
  width: 62%;
  height: 6px;
  border-radius: 3px;
  background: #76777b;
}

/* playback controls */
.controls {
  height: 66px;
  flex: none;
  display: flex;
  align-items: center;
  margin-top: 4px;
  padding: 0 33px 0 37px;
  background: #242328;
}

.ctl {
  margin-right: 21px;
}

.ctl svg,
.range-icon {
  width: 24px;
  height: 24px;
}

.ctl + .line {
  margin: 0 30px 0 3px;
}

.play svg,
.stop svg {
  width: 28px;
  height: 28px;
}

.stop {
  margin: 0 16px;
  color: #929295;
}

.stop circle {
  stroke: #66666b;
}

.progress {
  flex: 1;
  min-width: 0;
  padding-top: 10px;
}

.progress input {
  display: block;
  width: calc(100% - 14px);
  height: 12px;
  margin: 0 8px 3px 6px;
  appearance: none;
  background: linear-gradient(#414146, #414146) center / 100% 4px no-repeat;
}

.progress input::-webkit-slider-thumb {
  appearance: none;
  width: 5px;
  height: 11px;
  border-radius: 1px;
  background: #fff;
}

.progress-times {
  display: flex;
  justify-content: space-between;
  font-size: 11px;
}

.total {
  color: #66666b;
}

.progress + .line {
  margin: 0 35px 0 16px;
}

.time-set {
  display: flex;
  align-items: center;
  margin-left: 22px;
}

.time-set label {
  margin-right: 10px;
}

.time-set input {
  border: 0;
  padding: 0;
  background: none;
  color: inherit;
  font: inherit;
  width: 34px;
}

.time-set .min,
.spin {
  height: 26px;
  border: 1px solid #36363b;
  border-radius: 4px;
}

.time-set .min {
  width: 22px;
  text-align: center;
}

.time-set > span {
  width: 9px;
  text-align: center;
}

.spin {
  width: 63px;
  display: flex;
  align-items: center;
  justify-content: space-between;
  padding: 0 3px;
}

.spin svg {
  width: 6px;
  height: 14px;
  fill: #8d8d91;
  stroke: none;
}

.pin {
  width: 9px;
  height: 16px;
  margin-left: 13px;
}

.time-set + .line {
  margin: 0 34px 0 23px;
}

.zoom {
  color: #b9b9bc;
}

.zoom + .zoom {
  margin-left: 24px;
}

.zoom svg {
  width: 18px;
  height: 18px;
}

/* edit tools */
.tools {
  position: relative;
  flex: none;
  height: 100px;
  display: flex;
  align-items: flex-start;
  justify-content: space-between;
  margin-top: 2px;
  padding: 21px 10px 0;
  background: #242328;
}

.tools .line {
  margin-top: 17px;
}

.group {
  display: flex;
}

.tool {
  position: relative;
  width: 57px;
  flex-direction: column;
  gap: 7px;
  font-size: 11px;
  white-space: nowrap;
}

.tool.wide {
  width: 66px;
}

.tool.widest {
  width: 88px;
}

.pic {
  width: 36px;
  height: 36px;
  display: flex;
  align-items: center;
  justify-content: center;
  border-radius: 4px;
}

.hover .pic {
  background: #36363b;
}

.pic svg {
  width: 26px;
  height: 26px;
}

.pic .mid {
  width: 24px;
  height: 24px;
}

.pic .box {
  width: 22px;
  height: 22px;
}

.pic .low {
  width: 24px;
  height: 20px;
}

.pic text {
  fill: #a4a4a8;
  stroke: none;
  font-size: 14px;
}

.tip {
  position: absolute;
  left: 1px;
  top: -33px;
  width: 57px;
  height: 26px;
  border: 1px solid #4a4a4f;
  border-radius: 4px;
  background: #242328;
  font-size: 13px;
  line-height: 23px;
}

.tip::after {
  content: "";
  position: absolute;
  left: 24px;
  bottom: -5px;
  width: 8px;
  height: 8px;
  border: solid #4a4a4f;
  border-width: 0 1px 1px 0;
  background: #242328;
  transform: rotate(45deg);
}

.callout {
  position: absolute;
  left: 1px;
  top: -28px;
  width: 78px;
  height: 117px;
  border: 3px solid #fc1f12;
  border-radius: 4px;
}

.arrow {
  position: absolute;
  left: 87px;
  top: -219px;
  width: 257px;
  height: 164px;
  fill: #fc1f12;
  stroke: none;
  pointer-events: none;
}

/* footer */
.footer {
  height: 40px;
  flex: none;
  display: grid;
  grid-template-columns: 1fr auto 1fr;
  align-items: center;
  padding: 2px 19px 0 21px;
  color: #bcbcbf;
}

.foot-left,
.foot-left a,
.foot-mid {
  display: flex;
  align-items: center;
}

.foot-left {
  gap: 21px;
}

.foot-left a {
  gap: 8px;
}

.foot-left svg {
  width: 18px;
  height: 17px;
  color: #8c8c91;
  stroke-width: 2;
}

.foot-left .thin {
  stroke-width: 1;
}

.foot-left .thick {
  stroke-width: 3;
}

.foot-mid {
  gap: 20px;
  padding-left: 62px;
  font-size: 14px;
}

.foot-mid svg {
  width: 22px;
  height: 18px;
  margin-right: -10px;
  color: #8c8c91;
}

.version {
  justify-self: end;
}
```
